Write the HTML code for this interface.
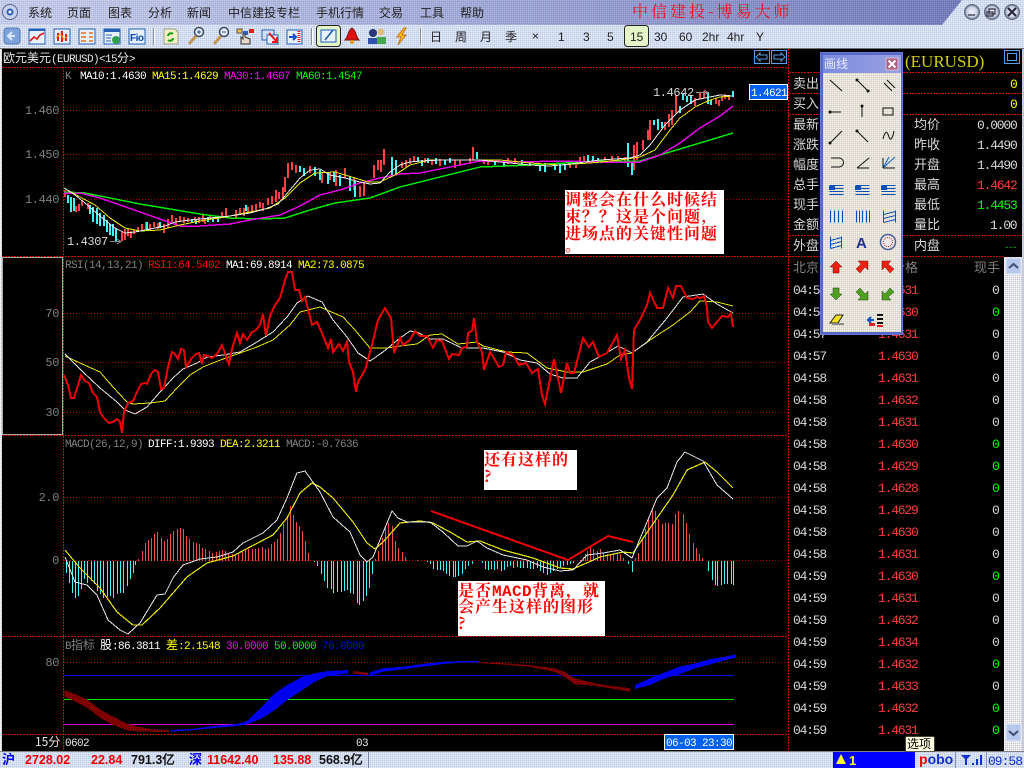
<!DOCTYPE html>
<html lang="zh"><head><meta charset="utf-8"><title>中信建投-博易大师</title>
<style>
html,body{margin:0;padding:0;background:#000;width:1024px;height:768px;overflow:hidden}
svg{position:absolute;left:0;top:0;display:block}
text{white-space:pre}
.c{font:12px "WenQuanYi Zen Hei","Noto Sans CJK SC",sans-serif}
.c13{font:13px "WenQuanYi Zen Hei","Noto Sans CJK SC",sans-serif}
.h{font:11px "Liberation Mono",monospace;letter-spacing:-.6px}
.hc{font:11px "Liberation Mono","WenQuanYi Zen Hei","Noto Sans CJK SC",monospace;letter-spacing:-.6px}
.cj{font:12px "WenQuanYi Zen Hei","Noto Sans CJK SC",sans-serif;letter-spacing:0}
.n{font:13px "Liberation Mono",monospace;letter-spacing:-1.2px}
.a{font:12px "Liberation Mono",monospace;letter-spacing:-.4px;fill:#808080}
.b{font:bold 16px "Noto Serif CJK SC","Liberation Serif",serif;fill:#f00;letter-spacing:1px}
.s{font:bold 12.5px "Liberation Sans",sans-serif}
.tb{font:12px "Liberation Sans",sans-serif;fill:#222}
</style></head><body>
<svg width="1024" height="768" viewBox="0 0 1024 768" xmlns="http://www.w3.org/2000/svg">
<defs>
<pattern id="d1" width="2" height="2" patternUnits="userSpaceOnUse"><rect width="2" height="2" fill="#d4def2"/><rect width="1" height="1" fill="#c0cce6"/><rect x="1" y="1" width="1" height="1" fill="#e6ecf8"/></pattern>
<pattern id="d2" width="2" height="2" patternUnits="userSpaceOnUse"><rect width="2" height="2" fill="#e6e2d6"/><rect width="1" height="1" fill="#f4f2ea"/><rect x="1" y="1" width="1" height="1" fill="#d4d0c6"/></pattern>
<pattern id="d3" width="2" height="2" patternUnits="userSpaceOnUse"><rect width="2" height="2" fill="#e4e4ea"/><rect width="1" height="1" fill="#ffffff"/><rect x="1" y="1" width="1" height="1" fill="#c8c8d4"/></pattern>
<pattern id="d4" width="2" height="2" patternUnits="userSpaceOnUse"><rect width="1" height="1" fill="#fff" opacity=".18"/><rect x="1" y="1" width="1" height="1" fill="#3a4a9a" opacity=".15"/></pattern>
<pattern id="dr" width="2" height="2" patternUnits="userSpaceOnUse"><rect width="2" height="2" fill="#8a0000"/><rect width="1" height="1" fill="#5a0000"/></pattern>
<linearGradient id="tg" x1="0" x2="1" y1="0" y2="0"><stop offset="0" stop-color="#c6cdea"/><stop offset=".45" stop-color="#a4acd8"/><stop offset=".8" stop-color="#848cc4"/><stop offset="1" stop-color="#7078b8"/></linearGradient>
<linearGradient id="pg" x1="0" x2="1" y1="0" y2="0"><stop offset="0" stop-color="#7c8ce0"/><stop offset="1" stop-color="#98a0e0"/></linearGradient>
<radialGradient id="btn"><stop offset="0" stop-color="#f0f4fc"/><stop offset=".7" stop-color="#c8d0e4"/><stop offset="1" stop-color="#58607c"/></radialGradient>
</defs>

<!-- window chrome -->
<rect width="1024" height="49" fill="url(#d1)"/>
<polygon points="0,0 962,0 942,25 0,25" fill="url(#tg)"/>
<polygon points="0,0 962,0 942,25 0,25" fill="url(#d4)"/>
<rect y="48" width="1024" height="1" fill="#707070"/>
<rect y="49" width="1024" height="703" fill="#000"/>
<rect y="49" width="2" height="703" fill="url(#d3)"/>
<rect x="1022" y="49" width="2" height="703" fill="#c8ccd8"/>

<circle cx="10" cy="12" r="7.5" fill="#c8d2ec" stroke="#58648c"/><circle cx="10" cy="12" r="3.5" fill="#3060b0"/><circle cx="10" cy="12" r="1.5" fill="#fff"/>
<g class="c" fill="#222">
<text x="28" y="17">系统</text><text x="67" y="17">页面</text><text x="108" y="17">图表</text><text x="148" y="17">分析</text><text x="187" y="17">新闻</text><text x="228" y="17">中信建投专栏</text><text x="316" y="17">手机行情</text><text x="379" y="17">交易</text><text x="420" y="17">工具</text><text x="460" y="17">帮助</text>
</g>
<text x="632" y="17" fill="#f01020" style="font:16px 'Noto Serif CJK SC','Liberation Serif',serif;letter-spacing:3px">中信建投-博易大师</text>
<g fill="url(#btn)" stroke="#606880"><circle cx="972" cy="12" r="7.5"/><circle cx="992" cy="12" r="7.5"/><circle cx="1012" cy="12" r="7.5"/></g>
<path d="M968 15h7M989 9h6v5h-6zM987 12h6v4h-6z" fill="none" stroke="#334" stroke-width="1.2"/><path d="M1008 8l8 8M1016 8l-8 8" stroke="#223" stroke-width="2"/>

<!-- toolbar icons -->
<g>
<rect x="4" y="28" width="16" height="16" rx="3" fill="#7ca4dc" stroke="#5478b0"/><path d="M15 36H9M12 32l-4 4 4 4" stroke="#dfe8f8" stroke-width="2" fill="none"/>
<rect x="29" y="29" width="16" height="15" fill="#e8f0fc" stroke="#2860b8"/><rect x="29" y="29" width="16" height="2" fill="#2860b8"/><path d="M30 41l4-4 3 2 3-4 4-2" stroke="#e01818" stroke-width="1.6" fill="none"/>
<rect x="54" y="29" width="16" height="15" fill="#e8f0fc" stroke="#2860b8"/><path d="M58 33v8M62 31v11M66 34v7" stroke="#e81818" stroke-width="2"/><path d="M56 38l4-4 4 5 4-3" stroke="#f0a000" fill="none"/>
<rect x="79" y="29" width="16" height="15" fill="#e8f0fc" stroke="#2860b8"/><path d="M81 33h5M89 33h4M81 37h5M89 37h4M81 41h5M89 41h4" stroke="#e07020" stroke-width="1.5"/>
<rect x="104" y="29" width="16" height="15" fill="#e8f0fc" stroke="#2860b8"/><rect x="104" y="29" width="16" height="3" fill="#2860b8"/><path d="M106 35h6M106 38h5M106 41h5" stroke="#2860b8"/><circle cx="116" cy="40" r="4" fill="#30a050"/>
<rect x="129" y="29" width="16" height="15" fill="#e8f0fc" stroke="#2860b8"/><text x="130" y="41" fill="#0848a8" style="font:bold 10px 'Liberation Sans',sans-serif;letter-spacing:-.5px">Fio</text>
<rect x="153" y="28" width="1" height="17" fill="#909098"/><rect x="154" y="28" width="1" height="17" fill="#fff"/>
<path d="M164 29h11l3 3v12h-14z" fill="#f4f0c8" stroke="#a0a080"/><path d="M168 36a3 3 0 0 1 5-2M173 38a3 3 0 0 1-5 2" stroke="#18a018" stroke-width="2" fill="none"/>
<circle cx="199" cy="32" r="4.5" fill="#e8eef8" stroke="#404860" stroke-width="1.5"/><path d="M189 44l7-8" stroke="#c09850" stroke-width="3"/><path d="M197 32h4M199 30v4" stroke="#205090"/>
<circle cx="224" cy="32" r="4.5" fill="#e8eef8" stroke="#404860" stroke-width="1.5"/><path d="M214 44l7-8" stroke="#c09850" stroke-width="3"/><path d="M222 32h4" stroke="#205090"/>
<rect x="237" y="29" width="5" height="4" fill="#f0c040" stroke="#555"/><rect x="243" y="31" width="5" height="4" fill="#3060c0"/><rect x="249" y="29" width="5" height="4" fill="#e02020"/><path d="M241 37v7h9v-5l-5-2v-3h-2v5z" fill="#e8d8c8" stroke="#333"/>
<rect x="262" y="30" width="12" height="10" fill="#d0e0f8" stroke="#2860b8"/><rect x="267" y="35" width="11" height="9" fill="#e8f0fc" stroke="#2860b8"/><path d="M269 33l8 9M277 37v5h-5" stroke="#e01818" stroke-width="2" fill="none"/>
<rect x="287" y="30" width="15" height="14" fill="#e8f0fc" stroke="#2860b8"/><path d="M289 37h6M293 34l3 3-3 3" stroke="#1050c8" stroke-width="2" fill="none"/><path d="M299 31v12" stroke="#e01818" stroke-width="3" stroke-dasharray="1 1"/>
<rect x="311" y="28" width="1" height="17" fill="#909098"/><rect x="312" y="28" width="1" height="17" fill="#fff"/>
<rect x="316.500" y="25.500" width="24" height="21" rx="3" fill="#e4f6c8" stroke="#222"/><rect x="321" y="30" width="15" height="12" fill="#e8f4fc" stroke="#1858b8"/><path d="M325 40l8-10" stroke="#1858b8" stroke-width="1.500"/>
<path d="M352 28l2 2c2 2 2 7 5 10h-14c3-3 3-8 5-10z" fill="#e01010" stroke="#801010"/><circle cx="352" cy="42" r="2" fill="#e8a020"/>
<circle cx="373" cy="33" r="4" fill="#283878"/><path d="M368 44v-6h10v6z" fill="#3050b0"/><circle cx="381" cy="32" r="3.5" fill="#e0c080"/><path d="M377 44v-7h9v7z" fill="#48a850"/>
<path d="M404 28l-7 9h4l-3 8 8-10h-4l4-7z" fill="#f8c020" stroke="#c87010"/>
<rect x="420" y="28" width="1" height="17" fill="#909098"/><rect x="421" y="28" width="1" height="17" fill="#fff"/>
<rect x="624.500" y="25.500" width="24" height="21" rx="3" fill="#e4f6c8" stroke="#222"/>
</g>
<g class="c" fill="#222"><text x="430" y="41">日</text><text x="455" y="41">周</text><text x="480" y="41">月</text><text x="505" y="41">季</text></g>
<g class="tb"><text x="532" y="40">×</text><text x="558" y="41">1</text><text x="583" y="41">3</text><text x="607" y="41">5</text><text x="630" y="41">15</text><text x="654" y="41">30</text><text x="679" y="41">60</text><text x="702" y="41">2hr</text><text x="727" y="41">4hr</text><text x="756" y="41">Y</text></g>

<!-- separators / frame -->
<g shape-rendering="crispEdges" fill="none">
<g stroke="#d00000" stroke-dasharray="2 1">
<path d="M2 67.500H788M2 256.500H788M2 435.500H788M2 636.500H788M2 734.500H788M789 72.500H1022M789 93.500H1022M789 114.500H1022M789 235.500H1022M789 256.500H1004M63.500 67V751M788.500 49V751"/>
</g>
<g stroke="#a80000" stroke-dasharray="1 2">
<path d="M64 110.500H788M64 154.500H788M64 199.500H788M64 313.500H788M64 362.500H788M64 412.500H788M64 497.500H788M64 560.500H788M64 662.500H788"/>
</g>
<rect x="2.500" y="257.500" width="60" height="177" stroke="#a8a8a8"/>
</g>

<!-- K chart -->
<g shape-rendering="crispEdges" fill="none" stroke-width="2">
<path stroke="#ff4040" d="M65 190V197M76 206V212M79 204V211M82 200V206M88 203V209M122 232V241M125 229V240M128 228V236M131 231V238M134 230V234M138 227V232M142 224V230M146 222V229M150 224V231M154 222V227M158 223V229M164 224V233M168 219V228M172 215V222M176 218V225M180 216V222M184 217V223M188 218V222M195 217V222M199 217V223M203 214V222M205 218V224M210 216V220M222 212V218M226 208V218M236 210V218M240 208V215M244 208V216M248 207V213M252 205V212M256 204V210M260 202V208M263 203V211M268 198V205M272 196V204M276 190V202M279 192V199M283 187V198M285 177V192M288 163V178M292 162V170M296 165V173M310 166V173M322 172V183M330 172V180M336 170V186M345 168V178M354 178V190M360 186V197M364 183V196M374 165V178M378 160V170M381 160V172M384 149V165M402 162V168M406 160V167M410 158V164M414 156V162M425 158V163M432 160V165M440 159V166M455 160V168M460 160V166M470 158V164M473 147V160M484 160V164M488 160V165M508 158V164M515 158V163M570 165V168M576 165V168M580 157V163M584 156V162M605 157V163M612 156V162M618 156V163M625 157V163M634 145V170M637 142V160M643 140V150M648 130V140M650 120V140M665 122V130M669 114V127M672 110V125M676 95V113M695 98V106M700 93V99M704 91V98M716 98V104M719 100V106M722 96V101M725 94V99M729 95V100"/>
<path stroke="#40f8f8" d="M68 195V203M71 197V212M74 198V211M90 205V214M93 207V222M97 208V224M100 213V226M104 215V226M107 220V232M110 224V235M113 224V236M116 228V241M147 222V230M160 222V228M192 219V223M196 220V224M208 217V222M213 218V222M218 216V222M246 205V211M300 166V172M304 168V176M315 167V176M320 170V180M328 173V184M334 172V182M340 175V186M350 177V191M355 181V197M392 157V175M396 160V175M418 157V162M422 160V166M428 158V163M436 158V164M445 160V165M450 158V163M477 152V159M495 160V165M504 160V166M522 160V165M530 161V166M540 163V171M545 163V172M555 164V170M560 164V173M565 164V170M588 155V162M593 156V163M598 158V163M628 143V167M632 163V175M654 120V125M658 119V130M662 122V128M680 106V113M683 94V100M687 96V102M691 95V104M708 92V104M711 100V105M733 91V97"/>
</g>
<g fill="none" shape-rendering="crispEdges">
<polyline stroke="#00e800" stroke-width="1.5" points="64,192 85,193 110,198 140,204 170,209 200,214 230,218 260,219 285,218 310,210 335,203 370,198 400,187 440,177 480,167 530,165 600,161 640,161 670,152 700,143 733,133"/>
<polyline stroke="#e800e8" stroke-width="1.5" points="64,193 80,193 100,198 120,205 140,212 160,219 180,226 200,226 230,224 250,220 280,215 300,206 320,195 340,190 360,183 380,178 400,174 420,173 450,167 480,161 520,162 560,161 600,162 640,162 660,155 680,143 700,128 720,116 733,106"/>
<polyline stroke="#e8e800" points="64,188 80,197 95,205 110,218 125,228 140,231 160,230 180,225 200,221 225,217 250,212 270,208 285,198 300,183 315,173 335,172 355,178 368,182 380,182 395,175 410,165 430,160 460,160 500,160 530,163 560,165 590,163 620,160 640,157 655,150 670,130 680,118 695,107 710,100 720,97 733,96"/>
<polyline stroke="#e8e8e8" points="64,188 75,195 85,203 100,216 115,228 125,233 135,232 150,229 165,226 175,222 190,220 210,218 230,216 250,213 265,209 278,204 290,190 300,178 310,170 320,169 330,175 345,178 360,182 370,184 380,183 390,172 400,165 410,162 420,161 440,160 480,160 500,162 530,165 550,166 570,164 600,160 630,158 640,155 650,145 665,125 680,110 695,100 710,97 720,95 733,96"/>
</g>
<path d="M110 241.500H121M117 239l4 2.500-4 2.500M696 92.500H708M704 90l4 2.500-4 2.500" stroke="#909090" fill="none"/>

<!-- RSI -->
<g fill="none" shape-rendering="crispEdges">
<polyline stroke="#e8e800" points="65,356 80,363 100,372 113,387 127,402 133,404 150,403 165,401 177,388 190,375 203,367 223,359 240,353 257,347 273,340 290,325 300,312 320,307 343,317 355,330 370,348 387,348 400,346 417,344 430,335 442,334 458,344 477,342 483,346 507,352 527,353 547,368 567,372 583,372 607,364 620,355 632,353 653,338 673,325 690,312 700,301 717,302 733,306"/>
<polyline stroke="#e8e8e8" points="65,354 83,372 100,388 117,402 125,410 135,414 147,407 160,392 173,378 183,369 197,363 207,357 223,355 240,352 257,342 273,332 287,317 297,303 308,296 322,302 333,320 347,337 358,353 370,361 383,352 400,338 410,331 417,332 430,339 443,339 462,348 472,348 483,348 503,352 520,360 537,363 550,374 563,378 577,378 590,362 603,355 618,346 632,353 647,342 667,318 683,297 703,294 717,304 733,313"/>
<polyline stroke="#f00000" stroke-width="2" points="64,375 68,385 71,398 74,398 78,385 81,375 85,381 89,383 93,393 97,397 100,412 103,417 109,423 113,422 117,419 120,422 122,433 124,412 128,403 133,401 137,392 141,384 145,383 147,384 151,374 155,370 158,372 161,389 164,388 168,367 172,352 175,354 178,359 181,349 184,350 186,367 192,358 196,354 199,353 202,364 204,355 208,356 212,358 217,354 222,345 225,353 229,364 232,349 237,333 240,343 243,334 247,340 252,332 256,330 260,325 263,314 266,336 270,316 275,305 280,298 285,280 288,272 292,272 295,290 299,290 302,301 305,297 312,325 317,322 322,333 328,348 331,339 333,352 339,344 343,351 347,342 349,362 353,372 356,392 358,382 365,370 372,345 378,320 385,308 391,318 394,353 400,338 403,345 410,340 415,331 420,336 427,336 433,348 437,340 442,341 449,359 452,354 459,355 462,348 467,347 468,333 472,331 474,318 477,342 482,352 484,370 490,352 495,360 499,367 503,365 506,352 513,355 519,365 526,363 532,373 538,369 542,395 545,404 554,359 561,393 567,363 570,373 574,373 583,338 589,347 593,342 599,357 607,353 612,344 617,335 621,359 625,350 629,378 632,389 634,330 641,318 647,305 650,293 657,308 663,308 668,288 673,298 676,286 681,286 687,298 693,299 697,297 700,298 704,296 707,307 708,322 712,328 722,316 728,317 731,313 733,327"/>
</g>

<!-- MACD histogram -->
<g shape-rendering="crispEdges" fill="none" transform="translate(.5,0)">
<path stroke="#40f8f8" d="M66 561v12M69 561v22M72 561v32M75 561v37M78 561v35M81 561v28M84 561v18M87 561v22M91 561v20M94 561v23M97 561v30M100 561v33M103 561v37M107 561v36M110 561v35M113 561v37M117 561v33M120 561v32M123 561v32M127 561v25M130 561v18M133 561v12M135 561v4M314 561v1M317 561v5M321 561v13M324 561v20M327 561v27M331 561v28M333 561v32M337 561v31M341 561v31M344 561v30M347 561v29M350 561v32M353 561v33M357 561v42M359 561v44M363 561v40M366 561v35M369 561v27M372 561v13M427 561v1M430 561v3M433 561v8M437 561v9M440 561v9M443 561v10M446 561v13M449 561v15M453 561v16M455 561v16M458 561v15M462 561v13M465 561v8M468 561v5M472 561v3M482 561v2M485 561v8M488 561v9M491 561v8M494 561v9M497 561v8M501 561v10M504 561v9M507 561v6M510 561v5M513 561v7M517 561v6M520 561v7M523 561v7M527 561v7M530 561v8M533 561v8M537 561v7M540 561v10M543 561v12M547 561v14M550 561v12M553 561v10M557 561v8M560 561v7M563 561v5M567 561v4M570 561v3M573 561v2M628 561v3M632 561v11M708 561v10M712 561v19M715 561v24M717 561v25M721 561v24M724 561v23M727 561v23M731 561v23M733 561v24"/>
<path stroke="#ff4848" d="M138 561v-2M142 561v-10M145 561v-18M148 561v-21M151 561v-23M154 561v-27M157 561v-29M161 561v-23M164 561v-20M167 561v-22M170 561v-27M173 561v-30M177 561v-32M180 561v-33M183 561v-32M186 561v-25M189 561v-22M193 561v-19M196 561v-18M199 561v-17M202 561v-13M205 561v-12M209 561v-10M212 561v-8M216 561v-9M219 561v-10M222 561v-11M225 561v-10M228 561v-8M232 561v-7M235 561v-6M238 561v-7M242 561v-9M245 561v-11M248 561v-12M252 561v-12M255 561v-12M258 561v-13M262 561v-14M265 561v-12M268 561v-13M271 561v-17M274 561v-19M277 561v-22M280 561v-28M283 561v-37M287 561v-45M290 561v-55M293 561v-46M296 561v-39M299 561v-35M302 561v-30M305 561v-20M308 561v-8M375 561v-2M378 561v-10M382 561v-23M385 561v-33M388 561v-38M392 561v-35M395 561v-20M398 561v-13M402 561v-9M405 561v-4M417 561v-1M580 561v-1M583 561v-4M585 561v-7M587 561v-10M590 561v-13M593 561v-12M597 561v-10M600 561v-12M603 561v-8M607 561v-7M610 561v-7M613 561v-7M617 561v-7M620 561v-7M623 561v-3M635 561v-3M638 561v-8M642 561v-22M645 561v-32M648 561v-42M652 561v-52M655 561v-50M658 561v-42M662 561v-37M665 561v-38M668 561v-38M672 561v-37M675 561v-47M678 561v-50M683 561v-47M686 561v-38M689 561v-27M693 561v-18M696 561v-13M699 561v-7M702 561v-3"/>
</g>
<g fill="none" shape-rendering="crispEdges">
<polyline stroke="#e8e800" stroke-width="1.2" points="65,550 80,568 100,588 117,612 133,625 142,625 160,608 187,577 207,563 233,556 250,547 273,535 287,518 300,493 312,483 320,487 333,498 353,522 367,543 375,549 383,542 400,523 420,521 433,523 450,532 467,542 480,541 503,550 533,558 560,568 573,569 600,557 623,552 633,553 657,518 673,495 687,470 705,462 717,472 733,488"/>
<polyline stroke="#e8e8e8" points="65,557 75,582 87,585 97,595 108,620 120,630 128,634 140,623 157,595 165,594 173,578 183,565 200,559 217,557 233,552 243,543 263,533 277,520 287,498 297,473 305,471 320,492 333,517 350,532 360,555 367,562 373,557 392,511 398,518 407,522 430,522 443,532 458,546 467,546 477,541 487,548 503,555 527,560 543,567 560,571 573,570 587,555 603,553 620,550 632,558 647,522 657,498 667,488 677,462 685,452 703,461 717,485 733,499"/>
<polyline stroke="#f00000" stroke-width="2" points="431,511 568,560 608,536 633,542"/>
</g>

<!-- B indicator -->
<g shape-rendering="crispEdges">
<path d="M64 675.500H734" stroke="#0000f0" fill="none"/><path d="M64 699.500H734" stroke="#00e800" fill="none"/><path d="M64 724.500H734" stroke="#e000e0" fill="none"/>
<polygon fill="url(#dr)" points="64.500,690 75.600,694.300 88,700 100.800,710 113.400,716.700 126,723.300 138.600,726.700 151,729.300 169,730 169,732 151,731.700 138.600,731.700 126,730 113.400,725 100.800,718.300 88,708.300 75.600,701.700 64.500,696.700"/>
<polygon fill="#0000f0" points="171,730 191.500,729 216.700,725.700 236.900,724 247,721 262,706.700 274.700,693.300 287.300,685 302.400,676.700 315,673.300 327.600,671 347.800,670 347.800,673.300 327.600,675.700 315,681.700 302.400,690 287.300,700 274.700,710 262,718.300 247,724.300 236.900,726 216.700,727.700 191.500,730.300 171,731.700"/>
<polygon fill="url(#dr)" points="352.800,671 368,672.700 368,675.700 352.800,673.300"/>
<polygon fill="#0000f0" points="370,672.300 383,668.300 403,666.700 428,663.300 443.500,661.700 463.700,661 479,661 479,662.700 463.700,662.300 443.500,664 428,666 403,669.300 383,671.700 370,675.700"/>
<polygon fill="url(#dr)" points="479,661.700 504,663.300 529,665 554,668.300 564.500,671.700 574.600,678.300 595,683.300 610,685.700 630,688.300 630,691.700 610,688.300 595,685.700 574.600,684.300 564.500,676.700 554,671.700 529,666.700 504,664.700 479,663"/>
<polygon fill="#0000f0" points="635,685 650,678.300 665,672.300 680,666.700 695.500,663.300 710.600,659 725.800,656.700 735.800,654.300 735.800,657.700 725.800,660 710.600,664.300 695.500,668.300 680,674 665,678.300 650,685 635,689"/>
</g>

<!-- chart text -->
<text x="3" y="62" fill="#e8e8e8"><tspan class="cj">欧元美元</tspan><tspan class="h">(EURUSD)&lt;15</tspan><tspan class="cj">分</tspan><tspan class="h">&gt;</tspan></text>
<g class="h">
<text x="65" y="79" fill="#808080">K</text><text x="80" y="79" fill="#fff">MA10:1.4630</text><text x="152" y="79" fill="#ff0">MA15:1.4629</text><text x="224" y="79" fill="#f0f">MA30:1.4607</text><text x="296" y="79" fill="#0f0">MA60:1.4547</text>
<text x="65" y="268" fill="#808080">RSI(14,13,21)</text><text x="148" y="268" fill="#f00">RSI1:64.5402</text><text x="226" y="268" fill="#fff">MA1:69.8914</text><text x="298" y="268" fill="#ff0">MA2:73.0875</text>
<text x="65" y="447" fill="#808080">MACD(26,12,9)</text><text x="148" y="447" fill="#fff">DIFF:1.9393</text><text x="220" y="447" fill="#ff0">DEA:2.3211</text><text x="286" y="447" fill="#808080">MACD:-0.7636</text>
</g>
<g class="h">
<text x="65" y="649" fill="#808080">B<tspan class="cj">指标</tspan></text><text x="100" y="649" fill="#fff"><tspan class="cj">股</tspan>:86.3811</text><text x="166" y="649" fill="#ff0"><tspan class="cj">差</tspan>:2.1548</text><text x="226" y="649" fill="#f0f">30.0000</text><text x="274" y="649" fill="#0f0">50.0000</text><text x="322" y="649" fill="#00f">70.0000</text>
</g>
<g class="a" text-anchor="end">
<text x="59" y="114">1.460</text><text x="59" y="158">1.450</text><text x="59" y="203">1.440</text><text x="59" y="317">70</text><text x="59" y="366">50</text><text x="59" y="416">30</text><text x="59" y="501">2.0</text><text x="59" y="564">0</text><text x="59" y="666">80</text>
</g>
<g class="a"><text x="67" y="245" style="fill:#d8d8d8">1.4307</text><text x="653" y="96" style="fill:#d8d8d8">1.4642</text></g>
<rect x="749.500" y="84.500" width="38" height="15" fill="#0060f0" stroke="#fff"/><text x="751" y="96" class="h" fill="#fff">1.4621</text>

<!-- annotation boxes -->
<rect x="565" y="190" width="159" height="64" fill="#fff"/>
<text class="b" x="565" y="205">调整会在什么时候结</text><text class="b" x="565" y="222">束？？这是个问题,</text><text class="b" x="565" y="239">进场点的关键性问题</text><text class="b" x="565" y="251">。</text>
<rect x="484" y="450" width="93" height="40" fill="#fff"/>
<text class="b" x="484" y="465">还有这样的</text><text class="b" x="484" y="482">?</text>
<rect x="458" y="581" width="147" height="55" fill="#fff"/>
<text class="b" x="458" y="596">是否<tspan style="font:bold 16px 'Liberation Mono',monospace;letter-spacing:.4px">MACD</tspan>背离，就</text><text class="b" x="458" y="612">会产生这样的图形</text><text class="b" x="458" y="629">?</text>

<!-- date row -->
<text x="35" y="746" class="c" fill="#e8e8e8">15分</text>
<text x="65" y="746" class="h" fill="#e8e8e8">0602</text><text x="356" y="746" class="h" fill="#e8e8e8">03</text>
<rect x="664.500" y="734.500" width="69" height="15" fill="#0060f0" stroke="#fff"/><text x="666" y="746" class="h" fill="#fff">06-03 23:30</text>

<!-- top-right arrow buttons -->
<g fill="none" stroke="#58a0e8" shape-rendering="crispEdges">
<rect x="754.500" y="50.500" width="15" height="13"/><rect x="771.500" y="50.500" width="15" height="13"/><rect x="1004.500" y="50.500" width="15" height="13"/><rect x="1007.500" y="53.500" width="9" height="7"/>
</g>
<path d="M767 55h-7v-2l-4 4 4 4v-2h7zM774 55h7v-2l4 4-4 4v-2h-7z" fill="none" stroke="#58a0e8"/>

<!-- right panel -->
<text x="905" y="67" fill="#d0d000" style="font:17px 'Liberation Serif',serif">(EURUSD)</text>
<g class="c13" fill="#d8d8d8">
<text x="793" y="88">卖出</text><text x="793" y="108">买入</text><text x="793" y="129">最新</text><text x="793" y="149">涨跌</text><text x="793" y="169">幅度</text><text x="793" y="189">总手</text><text x="793" y="209">现手</text><text x="793" y="229">金额</text><text x="793" y="250">外盘</text>
<text x="914" y="129">均价</text><text x="914" y="149">昨收</text><text x="914" y="169">开盘</text><text x="914" y="189">最高</text><text x="914" y="209">最低</text><text x="914" y="229">量比</text><text x="914" y="250">内盘</text>
</g>
<g class="n" fill="#d8d8d8">
<text x="1010" y="88" fill="#ff0">0</text><text x="1010" y="108" fill="#ff0">0</text>
<text x="977" y="129">0.0000</text><text x="977" y="149">1.4490</text><text x="977" y="169">1.4490</text><text x="977" y="189" fill="#ff4040">1.4642</text><text x="977" y="209" fill="#0f0">1.4453</text><text x="990" y="229">1.00</text><text x="1004" y="250" fill="#0c0" style="font-size:9px;letter-spacing:-1.4px">---</text>
</g>
<g class="c13" fill="#808080"><text x="793" y="272">北京</text><text x="892" y="272">价格</text><text x="974" y="272">现手</text></g>
<g class="n" fill="#d8d8d8" transform="translate(0,-1)">
<text x="793" y="295">04:57</text><text x="793" y="317">04:57</text><text x="793" y="339">04:57</text><text x="793" y="361">04:57</text><text x="793" y="383">04:58</text><text x="793" y="405">04:58</text><text x="793" y="427">04:58</text><text x="793" y="449">04:58</text><text x="793" y="471">04:58</text><text x="793" y="493">04:58</text><text x="793" y="515">04:58</text><text x="793" y="537">04:58</text><text x="793" y="559">04:58</text><text x="793" y="581">04:59</text><text x="793" y="603">04:59</text><text x="793" y="625">04:59</text><text x="793" y="647">04:59</text><text x="793" y="669">04:59</text><text x="793" y="691">04:59</text><text x="793" y="713">04:59</text><text x="793" y="735">04:59</text>
</g>
<g class="n" fill="#f84038" transform="translate(0,-1)">
<text x="878" y="295">1.4631</text><text x="878" y="317">1.4630</text><text x="878" y="339">1.4631</text><text x="878" y="361">1.4630</text><text x="878" y="383">1.4631</text><text x="878" y="405">1.4632</text><text x="878" y="427">1.4631</text><text x="878" y="449">1.4630</text><text x="878" y="471">1.4629</text><text x="878" y="493">1.4628</text><text x="878" y="515">1.4629</text><text x="878" y="537">1.4630</text><text x="878" y="559">1.4631</text><text x="878" y="581">1.4630</text><text x="878" y="603">1.4631</text><text x="878" y="625">1.4632</text><text x="878" y="647">1.4634</text><text x="878" y="669">1.4632</text><text x="878" y="691">1.4633</text><text x="878" y="713">1.4632</text><text x="878" y="735">1.4631</text>
</g>
<g class="n" fill="#d8d8d8" transform="translate(0,-1)">
<text x="992" y="295">0</text><text x="992" y="317" fill="#0f0">0</text><text x="992" y="339">0</text><text x="992" y="361">0</text><text x="992" y="383">0</text><text x="992" y="405">0</text><text x="992" y="427">0</text><text x="992" y="449" fill="#0f0">0</text><text x="992" y="471" fill="#0f0">0</text><text x="992" y="493" fill="#0f0">0</text><text x="992" y="515">0</text><text x="992" y="537">0</text><text x="992" y="559">0</text><text x="992" y="581" fill="#0f0">0</text><text x="992" y="603">0</text><text x="992" y="625">0</text><text x="992" y="647">0</text><text x="992" y="669" fill="#0f0">0</text><text x="992" y="691">0</text><text x="992" y="713" fill="#0f0">0</text><text x="992" y="735" fill="#0f0">0</text>
</g>

<!-- scrollbar -->
<rect x="1004" y="257" width="18" height="494" fill="url(#d3)"/>
<rect x="1006" y="258" width="15" height="16" fill="#b8c8ec" stroke="#e8eef8"/><path d="M1009 268l4.500-4 4.500 4" fill="none" stroke="#404e70" stroke-width="2"/>
<rect x="1006" y="724" width="15" height="17" fill="#b8c8ec" stroke="#e8eef8"/><path d="M1009 731l4.500 4 4.500-4" fill="none" stroke="#404e70" stroke-width="2"/>

<!-- status bar -->
<rect y="751" width="1024" height="17" fill="url(#d1)"/><rect y="751" width="1024" height="1" fill="#808080"/>
<g class="s">
<text x="2" y="764" fill="#0000f0" style="font:bold 13px 'Noto Sans CJK SC',sans-serif">沪</text>
<text x="25" y="764" fill="#f00000">2728.02</text><text x="91" y="764" fill="#f00000">22.84</text><text x="131" y="764" fill="#111">791.3亿</text>
<text x="189" y="764" fill="#0000f0" style="font:bold 13px 'Noto Sans CJK SC',sans-serif">深</text>
<text x="207" y="764" fill="#f00000">11642.40</text><text x="273" y="764" fill="#f00000">135.88</text><text x="319" y="764" fill="#111">568.9亿</text>
</g>
<rect x="368" y="752" width="1" height="16" fill="#7a84a8"/>
<rect x="833" y="752" width="82" height="16" fill="#0000ff"/><polygon points="836,764 846,764 841,754" fill="#ffff20"/><text x="849" y="765" fill="#ffff20" style="font:bold 13px 'Liberation Sans',sans-serif">1</text>
<text x="919" y="764" style="font:bold 14px 'Liberation Sans',sans-serif" fill="#1030d0"><tspan fill="#f00000">p</tspan>obo</text>
<rect x="955" y="752" width="1" height="16" fill="#8a94b8"/>
<path d="M961 755h10l-4 4v6h-2v-6z" fill="#1030d0"/><path d="M972 765h2v-2h-2zM976 765h2v-6h-2zM980 765h2v-10h-2z" fill="#1030d0"/>
<rect x="986" y="752" width="1" height="16" fill="#8a94b8"/>
<text x="988" y="765" class="n" fill="#1030d0" style="font-size:13px;letter-spacing:-1px">09:58</text>
<rect x="905.500" y="736.500" width="29" height="15" fill="#ffffe1" stroke="#000" stroke-width=".5"/><text x="907" y="748" class="c" fill="#000">选项</text>

<!-- drawing palette -->
<rect x="820" y="52" width="83" height="283" fill="#6878d0"/>
<rect x="821" y="53" width="81" height="281" fill="#5868c8"/>
<rect x="823" y="55" width="78" height="18" fill="url(#pg)"/>
<rect x="823" y="73" width="78" height="259" fill="url(#d2)"/>
<text x="824" y="68" class="c" fill="#e8ecfc">画线</text>
<rect x="886" y="58" width="12" height="12" fill="#b06080" stroke="#d8c0d0"/><path d="M888.500 60.500l7 7M895.500 60.500l-7 7" stroke="#fff" stroke-width="2"/>
<g fill="none" stroke="#111">
<path d="M830 80l12 11M857 80l11 11M884 83l8 8M887 80l8 8M829 112h12M862 106v11M883 108h10v7h-10zM830 143l12-12M857 131l11 11"/>
<path d="M883 139c3-12 5-5 6-2s3 4 5-6"/>
<path d="M831 158h8a4 4 0 0 1 0 9h-8M857 168l12-10M857 168h12"/>
<path d="M883 168l12-11M883 168l6-11M883 168h12M883 168v-10" stroke="#1060c0"/><path d="M883 168h12M883 168v-10"/>
</g>
<circle cx="857" cy="80" r="1.500" fill="#111"/><circle cx="868" cy="91" r="1.500" fill="#111"/><circle cx="830" cy="143" r="1.500" fill="#111"/><circle cx="857" cy="131" r="1.500" fill="#111"/><circle cx="830" cy="112" r="1.500" fill="#111"/><circle cx="862" cy="106" r="1.500" fill="#111"/>
<g stroke="#0850b8" fill="none" shape-rendering="crispEdges" transform="translate(.5,.5)">
<path d="M829 185h14M829 188h14M829 191h14M829 194h14M855 185h14M855 188h14M855 191h14M855 194h14M881 185h14M881 188h14M881 191h14M881 194h14"/>
<path d="M830 210v12M834 210v12M838 210v12M842 210v12M856 210v12M859 210v12M862 210v12M866 210v12M869 210v12M883 210v12M895 210v12"/>
<path d="M883 214l12-3M883 218l12-3M883 222l12-3"/>
<path d="M830 236v12M841 236v12M830 240l11-3M830 244l11-3M830 248l11-3"/>
</g>
<rect x="829" y="186" width="6" height="4" fill="#0850b8"/><rect x="855" y="186" width="6" height="4" fill="#0850b8"/><rect x="881" y="186" width="6" height="4" fill="#0850b8"/>
<text x="856" y="248" style="font:bold 15px 'Liberation Sans',sans-serif" fill="#203090">A</text>
<circle cx="888" cy="242" r="7.500" fill="#e8e8e8" stroke="#506090" stroke-width="1.500"/><circle cx="888" cy="242" r="4.500" fill="none" stroke="#d03030" stroke-dasharray="1 1"/>
<g fill="#f02010" stroke="#701010" stroke-width=".5">
<polygon points="836,261 842,267 839,267 839,273 833,273 833,267 830,267"/>
<polygon points="868,261 868,270 865,267 860,273 856,269 861,264 858,261"/>
<polygon points="882,261 891,261 888,264 894,269 890,273 885,267 882,270"/>
</g>
<g fill="#50a020" stroke="#204010" stroke-width=".5">
<polygon points="836,300 842,294 839,294 839,288 833,288 833,294 830,294"/>
<polygon points="868,300 868,291 865,294 860,288 856,292 861,297 858,300"/>
<polygon points="882,300 891,300 888,297 894,292 890,288 885,294 882,291"/>
</g>
<polygon points="830,323 836,315 843,315 838,323" fill="#f0e020" stroke="#222"/><rect x="832" y="323" width="12" height="2" fill="#888"/>
<path d="M868 320h6M871 317l-3 3 3 3" stroke="#1050c0" stroke-width="2" fill="none"/><path d="M877 315h6M877 319h6M877 323h6" stroke="#111" stroke-width="2"/><rect x="869" y="323" width="6" height="3" fill="#e02020"/><rect x="877" y="325" width="6" height="2" fill="#e02020"/>
</svg>
</body></html>
